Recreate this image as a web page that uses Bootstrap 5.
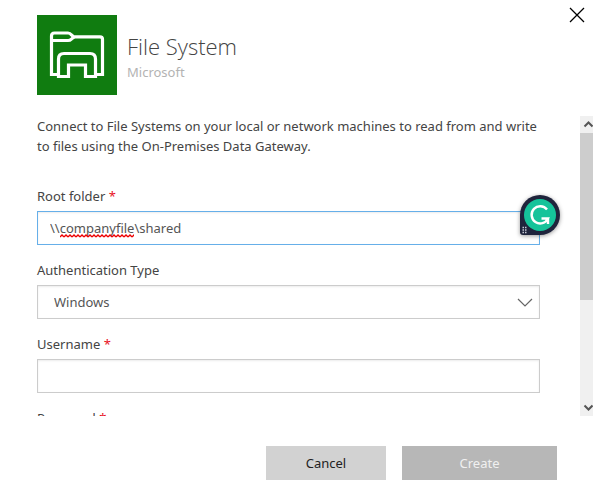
<!DOCTYPE html>
<html lang="en">
<head>
<meta charset="utf-8">
<meta name="viewport" content="width=device-width, initial-scale=1">
<title>File System</title>
<link href="https://cdn.jsdelivr.net/npm/bootstrap@5.3.0/dist/css/bootstrap.min.css" rel="stylesheet">
<style>
body { font-family: "Noto Sans", "Open Sans", sans-serif; font-size: 13px; line-height: 20px; color: #444; background: #fff; }
.dialog-head { padding: 15px 8px 21px 37px; }
.app-tile { width: 80px; height: 80px; background: #107c10; margin-right: 10px; }
.app-title { font-family: "Open Sans", "Noto Sans", sans-serif; font-size: 22px; line-height: 30px; font-weight: 300; color: #444; padding-top: 16px; }
.app-vendor { line-height: 22px; color: #b3b3b3; font-size: 13px; }
.close-btn { width: 16px; height: 16px; margin-top: -8px; }
.close-btn svg { display: block; }
.pane { min-height: 0; }
.pane-content { padding: 0 40px 0 37px; min-width: 0; }
.intro { margin-bottom: 30px; }
.field { margin-bottom: 15px; }
.form-label { margin-bottom: 5px; display: block; }
.req { color: #e81123; }
.form-control, .form-select { height: 34px; border: 1px solid #ccc; border-radius: 0; font-size: 13px; line-height: 20px; color: #555; padding: 6px 12px; box-shadow: inset 0 1px 2px rgba(0,0,0,.08); }
.form-select { padding-left: 16px; background-image: url("data:image/svg+xml,%3Csvg xmlns='http://www.w3.org/2000/svg' viewBox='0 0 16 9'%3E%3Cpath d='M1 1l7 7 7-7' fill='none' stroke='%23666' stroke-width='1.2'/%3E%3C/svg%3E"); background-size: 16px 9px; background-position: right 6px center; }
.form-control.active-field { border-color: #66afe9; }
.squiggle { left: 23px; bottom: 7px; }
.assist { right: -20px; top: -16px; width: 40px; height: 40px; filter: drop-shadow(0 1px 2px rgba(0,0,0,.4)); }
.track { width: 13px; background: #f0f0f0; }
.track svg { display: block; height: 17px; width: 13px; flex: none; }
.thumb { flex: 0 0 62.8%; background: #cdcdcd; }
.dialog-foot { padding: 30px 36px 13px; gap: 16px; }
.dialog-foot .btn { height: 34px; border: 0; border-radius: 0; font-size: 13px; line-height: 20px; padding: 7px 12px; }
.btn-cancel, .btn-cancel:hover { width: 120px; background: #d2d2d2; color: #222; }
.btn-create:disabled { width: 155px; background: #b7b7b7; color: #f0f0f0; opacity: 1; }
</style>
<script src="https://cdn.jsdelivr.net/npm/bootstrap@5.3.0/dist/js/bootstrap.bundle.min.js" defer></script>
</head>
<body>
<main class="d-flex flex-column vh-100 overflow-hidden">
  <header class="dialog-head d-flex align-items-start">
    <div class="app-tile flex-shrink-0">
      <svg width="80" height="80" viewBox="0 0 80 80" fill="none" stroke="#fff" stroke-width="3.200" aria-hidden="true">
        <path d="M20 59.500H14.500V21q0-3 3-3H31q2 0 3.500 2l2 1.800H63q2.500 0 2.500 2.500V59.500H60"/>
        <path d="M14.500 25.500H31q2 0 3.400-1.400L37 22"/>
        <path d="M21.500 61.500V44q0-5.500 5.500-5.500H53q5.500 0 5.500 5.500V61.500H48.500V50H31.500V61.500Z"/>
      </svg>
    </div>
    <div class="flex-grow-1">
      <h1 class="app-title mb-0">File System</h1>
      <div class="app-vendor">Microsoft</div>
    </div>
    <button type="button" class="close-btn btn border-0 p-0" aria-label="Close">
      <svg width="16" height="16" viewBox="0 0 16 16" stroke="#000" stroke-width="1.300" aria-hidden="true"><path d="M1 1l14 14M15 1L1 15"/></svg>
    </button>
  </header>

  <section class="pane d-flex flex-grow-1">
    <div class="pane-content flex-grow-1 overflow-hidden">
      <p class="intro">Connect to File Systems on your local or network machines to read from and write to files using the On-Premises Data Gateway.</p>
      <div class="field">
        <label class="form-label" for="root">Root folder <span class="req">*</span></label>
        <div class="position-relative">
          <input id="root" class="form-control active-field" type="text" value="\\companyfile\shared" spellcheck="false">
          <svg class="squiggle position-absolute" width="74" height="4" aria-hidden="true">
            <defs><pattern id="wave" width="4" height="4" patternUnits="userSpaceOnUse"><path d="M0 3L2 1 4 3" fill="none" stroke="#e00" stroke-width="1.300"/></pattern></defs>
            <rect width="74" height="4" fill="url(#wave)"/>
          </svg>
          <svg class="assist position-absolute" viewBox="0 0 40 40" role="img" aria-label="Writing assistant">
            <path d="M20 0a20 20 0 0 1 0 40H3q-3 0-3-3V20A20 20 0 0 1 20 0z" fill="#1f243c"/>
            <circle cx="20" cy="20" r="16" fill="#15c39a"/>
            <path d="M27 14.500A8.600 8.600 0 1 0 28 23.500H21.500M28 22.500V29" fill="none" stroke="#fff" stroke-width="2.400"/>
            <path d="M2.500 32.500h1.500M5 32.500h1.500M2.500 35h1.500M5 35h1.500M2.500 37.500h1.500M5 37.500h1.500" stroke="#c8cad6" stroke-width="1.400"/>
          </svg>
        </div>
      </div>
      <div class="field">
        <label class="form-label" for="auth">Authentication Type</label>
        <select id="auth" class="form-select"><option>Windows</option></select>
      </div>
      <div class="field">
        <label class="form-label" for="user">Username <span class="req">*</span></label>
        <input id="user" class="form-control" type="text">
      </div>
      <div class="field">
        <label class="form-label" for="pass">Password <span class="req">*</span></label>
        <input id="pass" class="form-control" type="password">
      </div>
    </div>
    <div class="track d-flex flex-column flex-shrink-0" aria-hidden="true">
      <svg viewBox="0 0 13 17" fill="none" stroke="#555" stroke-width="2"><path d="M4.500 10.500l4-4 4 4"/></svg>
      <div class="flex-grow-1 d-flex flex-column"><div class="thumb"></div></div>
      <svg viewBox="0 0 13 17" fill="none" stroke="#555" stroke-width="2"><path d="M4.500 6.500l4 4 4-4"/></svg>
    </div>
  </section>

  <footer class="dialog-foot d-flex justify-content-end">
    <button type="button" class="btn btn-cancel">Cancel</button>
    <button type="button" class="btn btn-create" disabled>Create</button>
  </footer>
</main>
</body>
</html>
